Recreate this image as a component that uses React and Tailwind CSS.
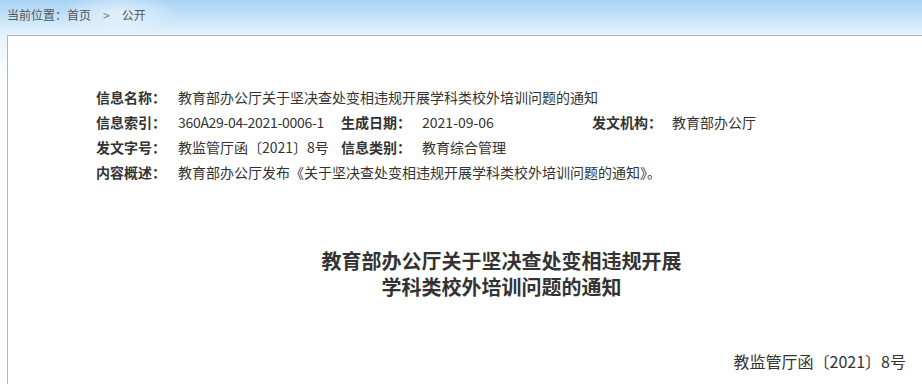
export default function App() {
  return (
    <div className="w-[922px] h-[384px] overflow-hidden relative font-['Noto_Sans_CJK_SC',sans-serif] bg-[linear-gradient(to_bottom,#a7d3f5_0px,#c6e3f9_18px,#e6f3fd_35px,#ffffff_80px)]">
      <div className="absolute left-[60px] top-[-10px] w-[120px] h-[45px] rounded-full bg-[radial-gradient(ellipse_at_center,rgba(255,255,255,0.55),rgba(255,255,255,0)_70%)]" />
      <div className="relative h-[35px] pb-[5px] pl-[7px] flex items-center text-[12px] text-[#555]">
        <span>当前位置：</span>
        <span>首页</span>
        <span className="mx-[12px] text-[#777]">&gt;</span>
        <span>公开</span>
      </div>
      <div className="relative ml-[7px] w-[988px] h-[400px] border-t border-l border-[#b5b5b5] bg-white pt-[49px]">
        <div className="pl-[88px] grid grid-cols-[82px_163px_81px_170px_80px_1fr] text-[14px] leading-[25px] text-[#333]">
          <span className="font-bold">信息名称：</span>
          <span className="col-span-5">教育部办公厅关于坚决查处变相违规开展学科类校外培训问题的通知</span>

          <span className="font-bold">信息索引：</span>
          <span className="tracking-[-0.3px]">360A29-04-2021-0006-1</span>
          <span className="font-bold">生成日期：</span>
          <span>2021-09-06</span>
          <span className="font-bold">发文机构：</span>
          <span>教育部办公厅</span>

          <span className="font-bold">发文字号：</span>
          <span>教监管厅函〔2021〕8号</span>
          <span className="font-bold">信息类别：</span>
          <span className="col-span-3">教育综合管理</span>

          <span className="font-bold">内容概述：</span>
          <span className="col-span-5">教育部办公厅发布《关于坚决查处变相违规开展学科类校外培训问题的通知》。</span>
        </div>
        <div className="mt-[63px] text-center text-[20px] font-bold leading-[26px] text-[#333]">
          <div>教育部办公厅关于坚决查处变相违规开展</div>
          <div>学科类校外培训问题的通知</div>
        </div>
        <div className="mt-[49px] pr-[89px] text-right text-[16px] leading-[24px] text-[#333]">
          教监管厅函〔2021〕8号
        </div>
      </div>
    </div>
  );
}
